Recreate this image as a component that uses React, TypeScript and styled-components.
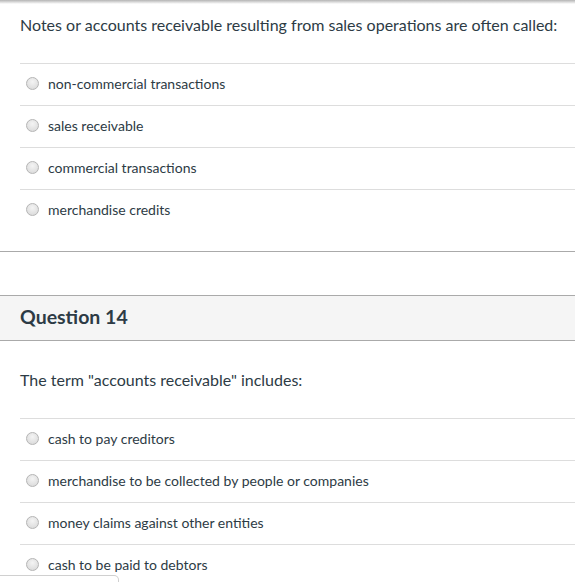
import React from "react";
import styled, { createGlobalStyle } from "styled-components";

const GlobalStyle = createGlobalStyle`
	html, body {
		margin: 0;
		padding: 0;
		background: #ffffff;
	}
	body {
		font-family: Lato, "Liberation Sans", sans-serif;
		color: #2d3b45;
	}
`;

const questions = [
	{
		id: 13,
		showHeader: false,
		text: "Notes or accounts receivable resulting from sales operations are often called:",
		answers: [
			"non-commercial transactions",
			"sales receivable",
			"commercial transactions",
			"merchandise credits"
		]
	},
	{
		id: 14,
		showHeader: true,
		text: 'The term "accounts receivable" includes:',
		answers: [
			"cash to pay creditors",
			"merchandise to be collected by people or companies",
			"money claims against other entities",
			"cash to be paid to debtors"
		]
	}
];

export default function App() {
	return (
		<>
			<GlobalStyle />
			<Page>
				{questions.map((q) => (
					<QuestionBlock key={q.id} $first={!q.showHeader}>
						{q.showHeader && <Header>Question {q.id}</Header>}
						<QuestionText $first={!q.showHeader}>{q.text}</QuestionText>
						<Answers>
							{q.answers.map((a) => (
								<Answer key={a}>
									<Radio type="radio" name={`q${q.id}`} />
									<AnswerLabel>{a}</AnswerLabel>
								</Answer>
							))}
						</Answers>
					</QuestionBlock>
				))}
			</Page>
			<FooterTab />
		</>
	);
}

const Page = styled.div`
	position: relative;
	display: flex;
	flex-direction: column;
	gap: 43px;
	&::before {
		content: "";
		position: absolute;
		top: 0;
		left: 0;
		right: 0;
		height: 4px;
		background: linear-gradient(#b4b4b4, rgba(255, 255, 255, 0));
	}
`;

const QuestionBlock = styled.section<{ $first: boolean }>`
	display: flex;
	flex-direction: column;
	border-bottom: 1px solid #aaaaaa;
	padding-bottom: ${(p) => (p.$first ? "20px" : "40px")};
`;

const Header = styled.h2`
	margin: 0;
	box-sizing: border-box;
	height: 46px;
	display: flex;
	align-items: center;
	padding: 0 20px 4px;
	background: #f5f5f5;
	border-top: 1px solid #aaaaaa;
	border-bottom: 1px solid #aaaaaa;
	font-size: 19.5px;
	font-weight: 700;
	color: #2d3b45;
`;

const QuestionText = styled.p<{ $first: boolean }>`
	margin: ${(p) => (p.$first ? "13px" : "27px")} 20px 26px;
	font-size: 16px;
	line-height: 24px;
	white-space: nowrap;
`;

const Answers = styled.div`
	display: flex;
	flex-direction: column;
	margin-left: 20px;
`;

const Answer = styled.label`
	display: flex;
	align-items: center;
	box-sizing: border-box;
	height: 42px;
	padding-bottom: 3px;
	border-top: 1px solid #dddddd;
	cursor: pointer;
`;

const Radio = styled.input`
	appearance: none;
	margin: 0 9px 0 6px;
	width: 13px;
	height: 13px;
	border-radius: 50%;
	border: 1px solid #b5b5b5;
	background: radial-gradient(circle at 50% 35%, #f4f4f4, #d6d6d6);
	box-sizing: border-box;
`;

const AnswerLabel = styled.span`
	font-size: 14px;
	color: #2d3b45;
`;

const FooterTab = styled.div`
	position: fixed;
	left: 0;
	top: 575px;
	width: 118px;
	height: 20px;
	background: #ffffff;
	border: 1px solid #d0d0d0;
	border-left: none;
	border-top-right-radius: 5px;
`;
